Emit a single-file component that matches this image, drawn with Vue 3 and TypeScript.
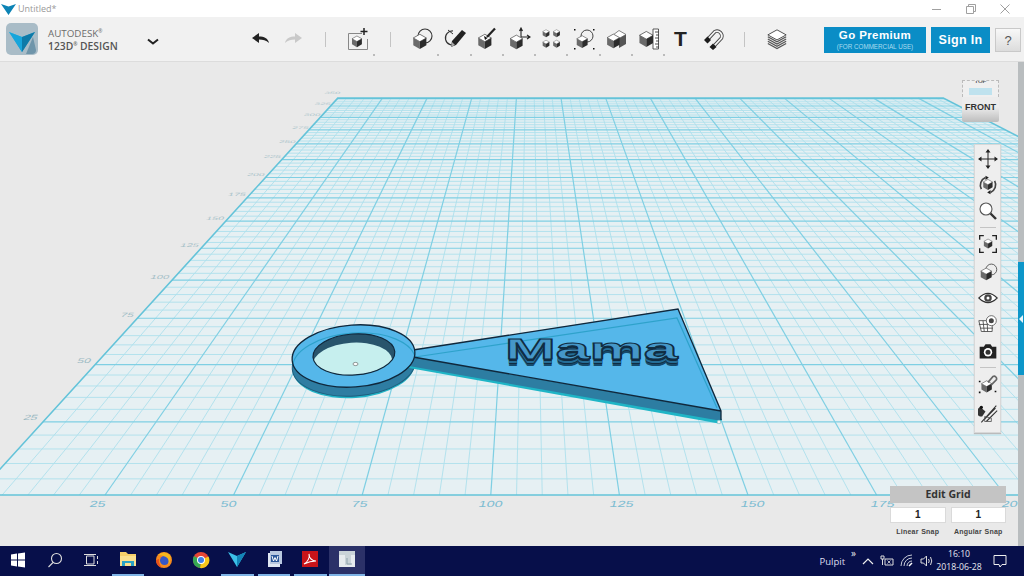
<script setup lang="ts">
const VX = 530
const VY = -113
const SMAX = 339
const TMAX = 344
const baseX = (s: number) => -23.6 + 5.144 * s
const depthY = (t: number) => VY + 111264 / (t + 183)
const pt = (s: number, t: number) => {
  const y = depthY(t)
  return { x: VX + (baseX(s) - VX) * ((y - VY) / 608), y }
}
interface Seg { k: string; x1: number; y1: number; x2: number; y2: number; major: boolean }
const minor: Seg[] = []
const major: Seg[] = []
for (let s = 5; s < SMAX; s += 5) {
  const a = pt(s, 0)
  const b = pt(s, TMAX)
  const seg = { k: 's' + s, x1: a.x, y1: a.y, x2: b.x, y2: b.y, major: s % 25 === 0 }
  ;(seg.major ? major : minor).push(seg)
}
for (let t = 5; t < TMAX; t += 5) {
  const a = pt(0, t)
  const b = pt(SMAX, t)
  const seg = { k: 't' + t, x1: a.x, y1: a.y, x2: b.x, y2: b.y, major: t % 25 === 0 }
  ;(seg.major ? major : minor).push(seg)
}
const c = [pt(0, 0), pt(0, TMAX), pt(SMAX, TMAX), pt(SMAX, 0)]
const surface = c.map((p) => `${p.x},${p.y}`).join(' ')

const bottomLabels = [
  { v: '25', x: 97 },
  { v: '50', x: 228 },
  { v: '75', x: 359 },
  { v: '100', x: 490 },
  { v: '125', x: 621 },
  { v: '150', x: 752 },
  { v: '175', x: 882 },
  { v: '20', x: 1009 },
]
const depthLabels = [25, 50, 75, 100, 125, 150, 175, 200, 225, 250, 275, 300, 325, 350].map((v) => {
  const p = pt(0, v)
  const f = (p.y - VY) / 608
  return { v, x: p.x - Math.max(0, 12 * (f - 0.35)), y: p.y - 1 - f, sx: 0.7 + 0.5 * f, sy: 0.72 * f + 0.05, o: 0.45 + 0.5 * f }
})
</script>

<template>
  <div class="app">
    <svg class="defs" width="0" height="0" aria-hidden="true">
      <defs>
        <g id="cube">
          <path d="M12 4 20 8.500 12 13 4 8.500Z" fill="#fff" stroke="#333" stroke-width=".8" />
          <path d="M4 8.500 12 13V22L4 17.500Z" fill="#6a6a6a" />
          <path d="M20 8.500 12 13V22L20 17.500Z" fill="#2b2b2b" />
        </g>
        <linearGradient id="logoV" x1="0" y1="0" x2="1" y2="1">
          <stop offset="0" stop-color="#46c3ec" />
          <stop offset="1" stop-color="#0b7fb4" />
        </linearGradient>
        <clipPath id="holeClip"><ellipse cx="354" cy="354.500" rx="41" ry="20.500" /></clipPath>
        <clipPath id="ringClip"><ellipse cx="353.500" cy="356" rx="61.500" ry="31" /></clipPath>
      </defs>
    </svg>

    <header class="titlebar">
      <svg class="title-logo" width="15" height="12" viewBox="0 0 15 12"><path d="M0 1 7.500 3.500 15 1 7.500 12Z" fill="#0c83b5" /></svg>
      <span class="title-text">Untitled*</span>
      <div class="win-controls">
        <span class="win-btn"><svg width="12" height="12" viewBox="0 0 12 12"><path d="M1 6.500H10" stroke="#a0a0a0" /></svg></span>
        <span class="win-btn"><svg width="12" height="12" viewBox="0 0 12 12" fill="none" stroke="#a0a0a0"><path d="M1.500 3.500H8.500V10.500H1.500Z" /><path d="M3.500 3.500V1.500H10.500V8.500H8.500" /></svg></span>
        <span class="win-btn"><svg width="12" height="12" viewBox="0 0 12 12"><path d="M1.500 1.500 10.500 10.500M10.500 1.500 1.500 10.500" stroke="#a0a0a0" /></svg></span>
      </div>
    </header>

    <nav class="toolbar">
      <div class="brand">
        <svg class="brand-logo" width="32" height="32" viewBox="0 0 32 32">
          <rect width="32" height="32" rx="5" fill="#a9bcc7" />
          <path d="M20 31 27 14 30 27Q30 31 26 31Z" fill="#6f95aa" />
          <path d="M3 9 16 14 29 9 16 29Z" fill="url(#logoV)" />
          <path d="M3 9 16 14 16 29Z" fill="#17a5db" />
          <path d="M16 14 29 9 16 29Z" fill="#0d7aa8" />
        </svg>
        <div class="brand-text">
          <span class="brand-top">AUTODESK<sup>®</sup></span>
          <span class="brand-bottom">123D<sup>®</sup> DESIGN</span>
        </div>
        <svg class="chevron" width="12" height="8" viewBox="0 0 12 8"><path d="M1 1.500 6 5.500 11 1.500" fill="none" stroke="#222" stroke-width="2" /></svg>
      </div>

      <div class="tool"><svg width="20" height="14" viewBox="0 0 20 14"><path d="M1 6 8 1V4.500C13 4.500 17 6 18 11 15 8 12 7.500 8 7.500V11Z" fill="#222" /></svg></div>
      <div class="tool"><svg width="20" height="14" viewBox="0 0 20 14"><path d="M19 6 12 1V4.500C7 4.500 3 6 2 11 5 8 8 7.500 12 7.500V11Z" fill="#c9c9c9" /></svg></div>
      <div class="tool"><span class="sep"></span></div>
      <div class="tool more"><svg width="24" height="24" viewBox="0 0 24 24"><path d="M2.500 6.500H16M21.500 12V22.500H2.500V6.500" fill="none" stroke="#888" /><use href="#cube" transform="translate(3.500 6.500) scale(.62)" /><path d="M18 1V8M14.500 4.500H21.500" stroke="#222" stroke-width="1.500" /></svg></div>
      <div class="tool"><span class="sep"></span></div>
      <div class="tool more"><svg width="24" height="24" viewBox="0 0 24 24"><circle cx="15" cy="9" r="7" fill="none" stroke="#333" stroke-width="1.100" /><use href="#cube" transform="translate(0 4) scale(.82)" /></svg></div>
      <div class="tool more"><svg width="24" height="24" viewBox="0 0 24 24"><path d="M10 4A7 7 0 1 0 13 17" fill="none" stroke="#333" stroke-width="1.200" /><path d="M5 3 10 7" stroke="#333" /><path d="M9 14 19 3 23 6 13 18 8 20Z" fill="#222" /><path d="M9 15 12 18 8 20Z" fill="#aaa" /></svg></div>
      <div class="tool more"><svg width="24" height="24" viewBox="0 0 24 24"><use href="#cube" transform="translate(0 4) scale(.82)" /><path d="M12 10 20 1.500" stroke="#222" stroke-width="2.200" /><path d="M9 9 12.500 11 10 13Z" fill="#111" /></svg></div>
      <div class="tool more"><svg width="24" height="24" viewBox="0 0 24 24"><use href="#cube" transform="translate(0 5) scale(.78)" /><path d="M14 10H22M20 8 23 10 20 12M14 10V2M12.500 4 14 1 15.500 4" fill="none" stroke="#222" stroke-width="1.100" /></svg></div>
      <div class="tool more"><svg width="24" height="24" viewBox="0 0 24 24"><use href="#cube" transform="translate(2 1) scale(.42)" /><use href="#cube" transform="translate(12.500 1) scale(.42)" /><use href="#cube" transform="translate(2 11.500) scale(.42)" /><use href="#cube" transform="translate(12.500 11.500) scale(.42)" /></svg></div>
      <div class="tool more"><svg width="24" height="24" viewBox="0 0 24 24"><circle cx="15" cy="9" r="6" fill="none" stroke="#444" /><use href="#cube" transform="translate(2 6) scale(.68)" /><path d="M2 2h1.500v1.500H2ZM21 2h1.500v1.500H21ZM2 21h1.500v1.500H2ZM21 21h1.500v1.500H21Z" fill="#111" /></svg></div>
      <div class="tool more"><svg width="24" height="24" viewBox="0 0 24 24"><path d="M15 4 22 8V17L15 21Z" fill="#555" /><path d="M15 3.500 22 7.500 15 11.500 9 8Z" fill="#fff" stroke="#555" stroke-width=".7" /><use href="#cube" transform="translate(0 4) scale(.78)" /></svg></div>
      <div class="tool more"><svg width="24" height="24" viewBox="0 0 24 24"><use href="#cube" transform="translate(0 1) scale(.86)" /><path d="M17 2H22.500V22H17Z" fill="#fff" stroke="#333" stroke-width=".8" /><path d="M19 5H22.500M20 8H22.500M19 11H22.500M20 14H22.500M19 17H22.500M20 20H22.500" stroke="#222" stroke-width=".8" /></svg></div>
      <div class="tool"><span class="t-glyph">T</span></div>
      <div class="tool"><svg width="24" height="24" viewBox="0 0 24 24"><path d="M7 12 14 4.500A5 5 0 0 1 20.500 11L13.500 18.500" fill="none" stroke="#444" stroke-width="3.500" /><path d="M7 12 14 4.500A5 5 0 0 1 20.500 11L13.500 18.500" fill="none" stroke="#f4f4f4" stroke-width="1.800" /><path d="M3 13 6.500 9.500 10 13 6.500 16.500ZM8.500 20 12 16.500 15.500 20 12 23Z" fill="#1b1b1b" /></svg></div>
      <div class="tool"><span class="sep"></span></div>
      <div class="tool"><svg width="22" height="22" viewBox="0 0 24 24"><path d="M12 2 22 7.500 12 13 2 7.500Z" fill="#fff" stroke="#444" /><path d="M2 9.500 12 15 22 9.500M2 12 12 17.500 22 12M2 14.500 12 20 22 14.500M2 17 12 22.500 22 17" fill="none" stroke="#555" stroke-width="1.300" /></svg></div>

      <div class="account">
        <button class="cta premium"><b>Go Premium</b><small>(FOR COMMERCIAL USE)</small></button>
        <button class="cta signin">Sign In</button>
        <button class="help">?</button>
      </div>
    </nav>

    <main class="workspace">
      <div class="canvas">
        <svg class="scene" width="1018" height="484" viewBox="0 62 1018 484">
          <polygon :points="surface" fill="#e6f0f3" />
          <line v-for="l in minor" :key="l.k" :x1="l.x1" :y1="l.y1" :x2="l.x2" :y2="l.y2" stroke="#aee0ec" stroke-width=".9" />
          <line v-for="l in major" :key="l.k" :x1="l.x1" :y1="l.y1" :x2="l.x2" :y2="l.y2" stroke="#7fcfe3" stroke-width="1.200" />
          <polygon :points="surface" fill="none" stroke="#64c3d9" stroke-width="1.600" />

          <text v-for="l in bottomLabels" :key="'b' + l.v" class="axis" :transform="`translate(${l.x} 507) skewX(-14) scale(1.300 .8)`" text-anchor="middle">{{ l.v }}</text>
          <text v-for="l in depthLabels" :key="'d' + l.v" class="axis far" :opacity="l.o" :transform="`translate(${l.x} ${l.y}) skewX(-25) scale(${l.sx} ${l.sy})`" text-anchor="end">{{ l.v }}</text>

          <!-- keychain model -->
          <g transform="rotate(-4 353.500 356)">
            <ellipse cx="353" cy="367" rx="61" ry="31" fill="#22b3c6" />
            <ellipse cx="353" cy="365" rx="61.500" ry="31" fill="#2e7da2" stroke="#1d5c7c" />
          </g>
          <polygon points="409,368 716,423 720,424 722,419 409,362" fill="#1fb5c6" />
          <polygon points="409,356 721,411 721,420 716,420 409,366" fill="#2d7da2" />
          <polygon points="413,350 678,309 721,411 413,357" fill="#55b7ea" />
          <path d="M415 357 677 318 717 408" fill="none" stroke="#2ea2cb" stroke-width="1.200" />
          <path d="M413 350 678 309 721 411 721 420M413 357 721 411" fill="none" stroke="#10283c" stroke-width="1.300" />

          <g transform="rotate(-4 353.500 356)">
            <ellipse cx="353.500" cy="356" rx="61.500" ry="31" fill="#55b7ea" />
            <ellipse cx="353.500" cy="364" rx="61.500" ry="31" fill="none" stroke="#2ea2cb" stroke-width="1.200" clip-path="url(#ringClip)" />
            <ellipse cx="354" cy="354.500" rx="41" ry="20.500" fill="#28546c" />
            <ellipse cx="352" cy="363" rx="40" ry="20.500" fill="#c6efee" clip-path="url(#holeClip)" />
            <ellipse cx="354" cy="354.500" rx="41" ry="20.500" fill="none" stroke="#10283c" stroke-width="1.200" />
            <ellipse cx="353.500" cy="356" rx="61.500" ry="31" fill="none" stroke="#10283c" stroke-width="1.300" />
          </g>
          <ellipse cx="355.500" cy="364" rx="2.500" ry="1.600" fill="#fff" stroke="#555" stroke-width=".6" />
          <circle cx="719" cy="422" r="1.800" fill="#f3f3f3" stroke="#9bb" stroke-width=".5" />
        </svg>

        <div class="mama">Mama</div>

        <div class="viewcube">
          <div class="cube-top"><span class="cube-top-label">TOP</span><span class="cube-top-shade"></span></div>
          <div class="cube-front">FRONT</div>
        </div>

        <aside class="nav-bar">
          <svg width="20" height="20" viewBox="0 0 20 20"><path d="M10 1V19M1 10H19" stroke="#222" /><path d="M10 0 7.500 3.500H12.500ZM10 20 7.500 16.500H12.500ZM0 10 3.500 7.500V12.500ZM20 10 16.500 7.500V12.500Z" fill="#222" /></svg>
          <svg width="20" height="20" viewBox="0 0 24 24"><path d="M4 17A10 10 0 0 1 9 3M20 7A10 10 0 0 1 15 21" fill="none" stroke="#444" stroke-width="2" /><use href="#cube" transform="translate(3.500 2.500) scale(.7)" /><path d="M9 1 13 3 9 6ZM15 23 11 21 15 18Z" fill="#222" /></svg>
          <svg width="20" height="20" viewBox="0 0 20 20"><circle cx="8" cy="8" r="6" fill="#fff" stroke="#555" stroke-width="1.100" /><path d="M12.500 12.500 18 18" stroke="#333" stroke-width="2.400" /></svg>
          <span class="nav-sep"></span>
          <svg width="20" height="20" viewBox="0 0 24 24"><path d="M2 7V2H7M17 2H22V7M22 17V22H17M7 22H2V17" fill="none" stroke="#222" stroke-width="1.600" /><use href="#cube" transform="translate(4.500 3.500) scale(.63)" /></svg>
          <svg class="nudge-s" width="20" height="20" viewBox="0 0 24 24"><circle cx="16" cy="9" r="6.500" fill="none" stroke="#444" /><use href="#cube" transform="translate(0 4) scale(.82)" /></svg>
          <svg width="20" height="20" viewBox="0 0 24 24"><path d="M1 12Q12 1 23 12 12 23 1 12Z" fill="#fff" stroke="#333" stroke-width="1.300" /><circle cx="12" cy="12" r="4.500" fill="#444" /><circle cx="12" cy="12" r="1.800" fill="#fff" /></svg>
          <svg width="20" height="20" viewBox="0 0 24 24"><path d="M1 8H17V21H4ZM1 12.500H18M3 17H18M6 8 7.500 21M11 8 11.500 21" fill="#fff" stroke="#444" /><circle cx="16" cy="8" r="6" fill="#fff" stroke="#555" /><circle cx="16" cy="8" r="3" fill="#444" /></svg>
          <svg class="nudge-xs" width="20" height="20" viewBox="0 0 24 24"><path d="M2 7H7L9 4H15L17 7H22V21H2Z" fill="#222" /><circle cx="12" cy="13.500" r="5" fill="#fff" /><circle cx="12" cy="13.500" r="3" fill="#333" /></svg>
          <span class="nav-sep"></span>
          <svg width="20" height="20" viewBox="0 0 24 24"><use href="#cube" transform="translate(1 5) scale(.78)" /><path d="M12 10 18 3A3 3 0 0 1 22 7L16 13" fill="none" stroke="#666" stroke-width="2" /><path d="M1 8h2v2H1ZM20 20h2v2H20ZM1 21h2v2H1Z" fill="#111" /></svg>
          <svg class="nudge-m" width="20" height="20" viewBox="0 0 24 24"><path d="M3 4 9 9 5 15A4 4 0 0 1 3 4Z" fill="#333" /><circle cx="4" cy="4" r="2" fill="#111" /><path d="M7 19 21 5M10 21 23 8M4 22 22 2" fill="none" stroke="#333" stroke-width="1.300" /><path d="M8 15 16 17V21H8Z" fill="none" stroke="#555" /></svg>
        </aside>

        <section class="grid-panel">
          <div class="grid-title">Edit Grid</div>
          <div class="grid-fields">
            <div class="grid-field"><div class="grid-value">1</div><label>Linear Snap</label></div>
            <div class="grid-field"><div class="grid-value">1</div><label>Angular Snap</label></div>
          </div>
        </section>
      </div>

      <div class="scrollbar">
        <div class="scroll-tab"><span class="scroll-arrow"></span></div>
      </div>
    </main>

    <footer class="taskbar">
      <div class="task"><svg width="16" height="16" viewBox="0 0 16 16"><path d="M1 2.500 7 1.600V7.500H1ZM8 1.400 15 .4V7.500H8ZM1 8.500H7V14.400L1 13.500ZM8 8.500H15V15.600L8 14.600Z" fill="#fff" /></svg></div>
      <div class="task"><svg width="16" height="16" viewBox="0 0 16 16" fill="none" stroke="#ddd" stroke-width="1.100"><circle cx="9.500" cy="6.500" r="5" /><path d="M6 10.500 1.500 15" /></svg></div>
      <div class="task"><svg width="16" height="16" viewBox="0 0 16 16" fill="none" stroke="#ddd"><path d="M3.500 4H11V12H3.500ZM1 2.500H13M1 13.500H13M14.500 4V7M14.500 9V12" /></svg></div>
      <div class="task open"><svg width="18" height="16" viewBox="0 0 18 16"><path d="M1 1H7L9 3H17V15H1Z" fill="#f6cf6a" /><path d="M1 5H17V15H1Z" fill="#fbe08e" /><path d="M3 10H15V15H12V12H6V15H3Z" fill="#2aa3c5" /></svg></div>
      <div class="task"><svg width="18" height="18" viewBox="0 0 18 18"><circle cx="9" cy="9" r="8" fill="#f68a1e" /><circle cx="9.500" cy="9.500" r="4.500" fill="#3658c7" /><path d="M3 4Q9 -1 15 4 17 9 13 14 15 8 11 6 7 4 3 4Z" fill="#f5b81e" /><path d="M1 9Q1 15 7 17 3 12 4 8Z" fill="#e8501c" /></svg></div>
      <div class="task"><svg width="18" height="18" viewBox="0 0 18 18"><circle cx="9" cy="9" r="8" fill="#e64535" /><path d="M9 9 16.500 5.500A8 8 0 0 1 8 17Z" fill="#f8c81c" /><path d="M9 9 8 17A8 8 0 0 1 2 5Z" fill="#35a853" /><circle cx="9" cy="9" r="4" fill="#fff" /><circle cx="9" cy="9" r="3" fill="#3f7fe8" /></svg></div>
      <div class="task open"><svg width="18" height="15" viewBox="0 0 18 15"><path d="M0 0 9 4 18 0 9 15Z" fill="#3cc0e8" /><path d="M9 4 18 0 9 15Z" fill="#1385b8" /></svg></div>
      <div class="task open"><svg width="18" height="18" viewBox="0 0 18 18"><path d="M3 3H15V17H3Z" fill="#dfe6f2" /><path d="M5 1H17V14H5Z" fill="#b9c8e0" /><path d="M6 5H14V12H6Z" fill="#2b579a" /><path d="M7 6 8.500 11 10 7.500 11.500 11 13 6" fill="none" stroke="#fff" /></svg></div>
      <div class="task open"><svg width="16" height="16" viewBox="0 0 16 16"><rect width="16" height="16" fill="#c8141a" /><path d="M2 13C6 11 8 6 7 3 7 7 10 10 14 10 10 10 6 11 2 13Z" fill="none" stroke="#fff" stroke-width="1.100" /></svg></div>
      <div class="task open active"><svg width="18" height="18" viewBox="0 0 18 18"><rect x="1" y="1" width="16" height="16" fill="#e6ebee" /><path d="M1 1H17V5H1ZM7 5H13V15H7Z" fill="#c9d3d8" /><path d="M9 8V14H14" fill="none" stroke="#8fa3ad" /></svg></div>

      <div class="tray">
        <span class="tray-label">Pulpit</span>
        <span class="tray-more">»</span>
        <svg width="12" height="8" viewBox="0 0 12 8"><path d="M1 7 6 2 11 7" fill="none" stroke="#eee" stroke-width="1.200" /></svg>
        <svg width="14" height="12" viewBox="0 0 14 12" fill="none" stroke="#ddd"><path d="M1 1H4V4H1ZM2.500 4V10" /><path d="M5 4H13V10H5Z" /><path d="M7.500 5.500 10.500 8.500M10.500 5.500 7.500 8.500" stroke-width=".8" /></svg>
        <svg width="14" height="14" viewBox="0 0 14 14" fill="none" stroke="#c8ccd8"><path d="M1 12A11 11 0 0 1 12 1M4 12A8 8 0 0 1 12 4M7 12A5 5 0 0 1 12 7" /><path d="M9 12 12 9" stroke="#fff" stroke-width="1.500" /></svg>
        <svg width="14" height="14" viewBox="0 0 14 14" fill="none" stroke="#ddd"><path d="M1 5H3.500L6.500 2V12L3.500 9H1Z" /><path d="M8.500 5Q10 7 8.500 9M10.500 3Q13 7 10.500 11" /></svg>
        <div class="clock"><span>16:10</span><span>2018-06-28</span></div>
        <svg class="notify" width="14" height="14" viewBox="0 0 14 14"><path d="M1 1.500H13V10.500H9L7 13 6 10.500H1Z" fill="none" stroke="#eee" /></svg>
      </div>
    </footer>
  </div>
</template>

<style>
html, body { margin: 0; background: #e9e9e9; overflow: hidden; }
</style>

<style scoped>
.app { width: 1024px; height: 576px; display: flex; flex-direction: column; font-family: "Open Sans", "Liberation Sans", sans-serif; overflow: hidden; }
.defs { position: absolute; }

.titlebar { height: 17px; flex: none; background: #fff; display: flex; align-items: center; }
.title-logo { margin-left: 1px; }
.title-text { margin-left: 2px; font-size: 9px; color: #999; }
.win-controls { margin-left: auto; display: flex; gap: 22px; padding-right: 13px; }
.win-btn { display: flex; }

.toolbar { height: 44px; flex: none; background: #f1f1f1; border-bottom: 1px solid #dcdcdc; display: flex; align-items: center; }
.brand { width: 245px; flex: none; display: flex; align-items: center; padding-left: 6px; box-sizing: border-box; }
.brand-text { margin: 2px 0 0 10px; display: flex; flex-direction: column; color: #666; line-height: 12px; width: 99px; }
.brand-top { font-size: 9.800px; color: #6c6c6c; }
.brand-bottom { font-size: 10.300px; font-weight: 600; color: #555; }
sup { font-size: 5px; line-height: 0; vertical-align: 4px; }
.chevron { margin-top: 5px; }
.tool { width: 32.250px; height: 44px; flex: none; display: flex; align-items: center; justify-content: center; position: relative; }
.more::after { content: ""; position: absolute; left: 31px; top: 37px; width: 2px; height: 2px; background: #bbb; }
.sep { width: 1px; height: 15px; background: #c4c4c4; }
.t-glyph { font: bold 21px "Liberation Sans", sans-serif; color: #222; }
.account { margin-left: auto; display: flex; align-items: center; gap: 5px; padding: 2px 3px 0 0; }
.cta { border: 0; background: #0a8dc6; color: #fff; font-family: "Liberation Sans", sans-serif; height: 26px; padding: 0; display: flex; flex-direction: column; align-items: center; justify-content: center; }
.premium { width: 102px; }
.premium b { font-size: 11.500px; letter-spacing: .4px; line-height: 13px; }
.premium small { font-size: 6.300px; color: #a9dcef; line-height: 9px; }
.signin { width: 59px; font-size: 12.500px; font-weight: bold; letter-spacing: .3px; }
.help { width: 26px; height: 24px; padding: 0; border: 1px solid #c9c9c9; background: linear-gradient(#f8f8f8, #dcdcdc); color: #555; font: 13px "Liberation Sans", sans-serif; }

.workspace { flex: 1; min-height: 0; display: flex; background: #e9e9e9; }
.canvas { flex: 1; position: relative; overflow: hidden; }
.scene { display: block; }
.axis { font: 11px "Liberation Sans", sans-serif; fill: #7cbcd2; }
.far { fill: #8fb3bd; }
.mama {
  position: absolute;
  left: 505px;
  top: 272px;
  font: bold 30px/30px "Liberation Sans", sans-serif;
  color: #4597c8;
  -webkit-text-stroke: 1px #102c42;
  text-shadow: 0 2px #102c42, 0 4px #256e97, 0 5px #102c42, 0 7px #164a6b;
  transform: scale(2.030, 1);
  transform-origin: left top;
}

.scrollbar { width: 6px; background: #b9bdbf; display: flex; flex-direction: column; padding-top: 200px; box-sizing: border-box; }
.scroll-tab { height: 113px; background: #0d96c9; display: flex; align-items: center; }
.scroll-arrow { width: 0; height: 0; border-style: solid; border-width: 4px 4px 4px 0; border-color: transparent #e8f6fb transparent transparent; margin-left: 1px; }

.viewcube { position: absolute; left: 962px; top: 18px; width: 37px; display: flex; flex-direction: column; align-items: stretch; }
.cube-top { height: 17px; position: relative; border: 1px dashed #bbb; border-bottom: 0; box-sizing: border-box; background: #efefef; overflow: hidden; display: flex; flex-direction: column; align-items: center; }
.cube-top-label { font: bold 6px "Liberation Sans", sans-serif; color: #555; height: 4px; margin-top: -2px; line-height: 8px; transform: scaleY(.6); }
.cube-top-shade { width: 23px; height: 7px; margin-top: 5px; background: #bfe2ee; }
.cube-front { height: 25px; box-sizing: border-box; background: linear-gradient(#ececec 40%, #bdbdbd); border-radius: 0 0 2px 2px; font: bold 9px "Liberation Sans", sans-serif; color: #333; display: flex; align-items: center; justify-content: center; padding-bottom: 6px; }

.nav-bar { position: absolute; left: 974px; top: 82px; width: 27px; height: 289px; box-sizing: border-box; background: #eeeeee; border: 1px solid #d8d8d8; box-shadow: 0 1px 1px #bbb; padding: 4px 0 0; display: flex; flex-direction: column; align-items: center; gap: 6px; }
.nav-sep { width: 16px; height: 1px; background: #c4c4c4; flex: none; }
.nudge-s { margin-top: 2px; }
.nudge-xs { margin-top: 1px; }
.nudge-m { margin-top: 4px; }

.grid-panel { position: absolute; left: 890px; top: 424px; width: 116px; background: transparent; }
.grid-title { height: 17px; background: #c4c4c4; color: #333; font: bold 10.500px/17px "Open Sans", sans-serif; text-align: center; }
.grid-fields { display: flex; gap: 5px; margin-top: 4px; }
.grid-field { flex: 1; display: flex; flex-direction: column; align-items: center; }
.grid-value { width: 100%; height: 16px; box-sizing: border-box; background: #fff; border: 1px solid #dadada; font: bold 10px/14px "Liberation Sans", sans-serif; text-align: center; color: #222; }
.grid-field label { margin-top: 4px; font: bold 7px/10px "Liberation Sans", sans-serif; color: #444; letter-spacing: .2px; word-spacing: .5px; white-space: nowrap; }

.taskbar { height: 30px; flex: none; background: #070f4a; display: flex; align-items: stretch; }
.task { width: 36.500px; flex: none; display: flex; align-items: center; justify-content: center; box-sizing: border-box; padding-bottom: 2px; }
.open { border-bottom: 2px solid #7fb4e6; }
.open:not(.active) { border-image: linear-gradient(90deg, transparent 8%, #7fb4e6 8%, #7fb4e6 92%, transparent 92%) 1; }
.active { background: #2b3168; }
.tray { margin-left: auto; display: flex; align-items: center; position: relative; }
.tray-label { font-size: 9.500px; color: #dde; margin-right: 3px; }
.tray-more { font-size: 10px; line-height: 10px; color: #eee; align-self: flex-start; margin: 2px 6px 0 3px; }
.tray svg { margin-right: 6px; }
.clock { display: flex; flex-direction: column; align-items: center; width: 62px; margin-left: -12px; font-size: 8.700px; line-height: 13px; color: #e8e8f0; }
.notify { margin: 0 17px 0 3px !important; }
</style>
